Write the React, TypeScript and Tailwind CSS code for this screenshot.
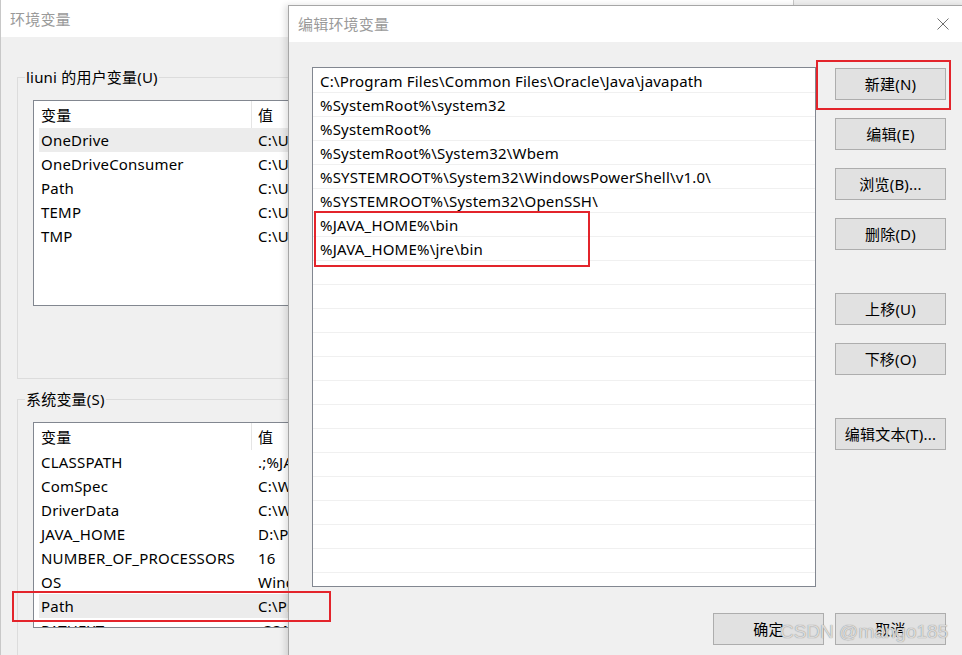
const font = "font-['Noto_Sans','Noto_Sans_CJK_SC',sans-serif]";

const userVars = [
  ['OneDrive', 'C:\\Users\\liuni\\OneDrive'],
  ['OneDriveConsumer', 'C:\\Users\\liuni\\OneDrive'],
  ['Path', 'C:\\Users\\liuni\\AppData\\Local\\Microsoft\\WindowsApps;'],
  ['TEMP', 'C:\\Users\\liuni\\AppData\\Local\\Temp'],
  ['TMP', 'C:\\Users\\liuni\\AppData\\Local\\Temp'],
];

const systemVars = [
  ['CLASSPATH', '.;%JAVA_HOME%\\lib;%JAVA_HOME%\\lib\\tools.jar'],
  ['ComSpec', 'C:\\WINDOWS\\system32\\cmd.exe'],
  ['DriverData', 'C:\\Windows\\System32\\Drivers\\DriverData'],
  ['JAVA_HOME', 'D:\\Program Files\\Java\\jdk1.8.0'],
  ['NUMBER_OF_PROCESSORS', '16'],
  ['OS', 'Windows_NT'],
  ['Path', 'C:\\Program Files\\Common Files\\Oracle\\Java\\javapath;'],
  ['PATHEXT', '.COM;.EXE;.BAT;.CMD;.VBS;.VBE;.JS'],
];

const pathEntries = [
  'C:\\Program Files\\Common Files\\Oracle\\Java\\javapath',
  '%SystemRoot%\\system32',
  '%SystemRoot%',
  '%SystemRoot%\\System32\\Wbem',
  '%SYSTEMROOT%\\System32\\WindowsPowerShell\\v1.0\\',
  '%SYSTEMROOT%\\System32\\OpenSSH\\',
  '%JAVA_HOME%\\bin',
  '%JAVA_HOME%\\jre\\bin',
];

const VarList = ({ rows, selected }: { rows: string[][]; selected: number }) => (
  <div className="ml-[15px] mt-[21px] h-[206px] w-[720px] overflow-hidden border border-[#828790] bg-white">
    <div className="flex h-[27px] items-center">
      <div className="flex h-full w-[218px] items-center border-r border-[#e5e5e5] pl-[7px]">变量</div>
      <div className="pl-[6px]">值</div>
    </div>
    {rows.map(([name, value], i) => (
      <div key={name} className="h-[24px] pl-[5px]">
        <div className={`flex h-full items-center pb-[1px] ${i === selected ? 'bg-[#ececec]' : ''}`}>
          <div className="w-[212px] shrink-0 pl-[2px]">{name}</div>
          <div className="whitespace-nowrap pl-[7px]">{value}</div>
        </div>
      </div>
    ))}
  </div>
);

const Button = ({ label, className = '' }: { label: string; className?: string }) => (
  <div
    className={`flex h-[32px] w-[111px] items-center justify-center border border-[#adadad] bg-[#e1e1e1] ${className}`}
  >
    {label}
  </div>
);

const App = () => {
  const rows = [...pathEntries, ...Array(14).fill('')];

  return (
    <div className={`relative h-[655px] w-[962px] overflow-hidden bg-[#f0f0f0] text-[15px] leading-[20px] tracking-[0.2px] text-black ${font}`}>
      {/* 环境变量 window (behind) */}
      <div className="absolute left-0 top-0 h-[655px] w-[794px] border-x border-[#c8c8c8] bg-[#f0f0f0]">
        <div className="flex h-[37px] items-center bg-white pl-[9px] text-[#9a9a9a]">环境变量</div>

        <div className="relative ml-[16px] mt-[40px] h-[302px] w-[760px] border border-[#dcdcdc]">
          <span className="absolute -top-[11px] left-[7px] bg-[#f0f0f0] px-[1px]">liuni 的用户变量(U)</span>
          <div className="pt-[1px]">
            <VarList rows={userVars} selected={0} />
          </div>
        </div>

        <div className="relative ml-[16px] mt-[20px] h-[300px] w-[760px] border border-[#dcdcdc]">
          <span className="absolute -top-[11px] left-[7px] bg-[#f0f0f0] px-[1px]">系统变量(S)</span>
          <div className="pt-[1px]">
            <VarList rows={systemVars} selected={6} />
          </div>
        </div>
      </div>

      {/* 编辑环境变量 dialog */}
      <div className="absolute left-[288px] top-[5px] flex h-[660px] w-[680px] flex-col border-l border-t border-[#a6a6a6] bg-[#f0f0f0] shadow-[-3px_0_6px_rgba(0,0,0,0.12)]">
        <div className="flex h-[36px] shrink-0 items-center justify-between bg-white pl-[9px] pr-[19px] text-[#9a9a9a]">
          <span>编辑环境变量</span>
          <svg width="12" height="12" viewBox="0 0 12 12" stroke="#707070" strokeWidth="1">
            <path d="M0.5 0.5l11 11M11.5 0.5l-11 11" />
          </svg>
        </div>

        <div className="pl-[23px] pt-[25px]">
          <div className="flex gap-[19px]">
            <div className="h-[520px] w-[504px] overflow-hidden border border-[#828790] bg-white pt-[1px]">
              {rows.map((entry, i) => (
                <div key={i} className="flex h-[24px] items-center border-b border-[#f0f0f0] pl-[7px] whitespace-nowrap">
                  {entry}
                </div>
              ))}
            </div>
            <div className="flex flex-col gap-[18px] pt-[1px]">
              <Button label="新建(N)" />
              <Button label="编辑(E)" />
              <Button label="浏览(B)..." />
              <Button label="删除(D)" />
              <Button label="上移(U)" className="mt-[25px]" />
              <Button label="下移(O)" />
              <Button label="编辑文本(T)..." className="mt-[25px]" />
            </div>
          </div>

          <div className="mt-[26px] flex w-[634px] justify-end gap-[11px]">
            <Button label="确定" />
            <Button label="取消" />
          </div>
        </div>
      </div>

      {/* red annotation boxes */}
      <div className="pointer-events-none absolute left-[816px] top-[60px] h-[50px] w-[135px] border-2 border-[#e3242b]" />
      <div className="pointer-events-none absolute left-[314px] top-[211px] h-[56px] w-[276px] border-2 border-[#e3242b]" />
      <div className="pointer-events-none absolute left-[12px] top-[591px] h-[31px] w-[319px] border-2 border-[#e3242b]" />

      {/* watermark */}
      <div className="pointer-events-none absolute left-[780px] top-[620px] font-['Liberation_Sans',sans-serif] text-[19px] leading-[24px] tracking-normal text-[rgba(235,235,235,0.85)] [text-shadow:0_0_1px_#6f6f6f]">
        CSDN @mango185
      </div>
    </div>
  );
};

export default App;
